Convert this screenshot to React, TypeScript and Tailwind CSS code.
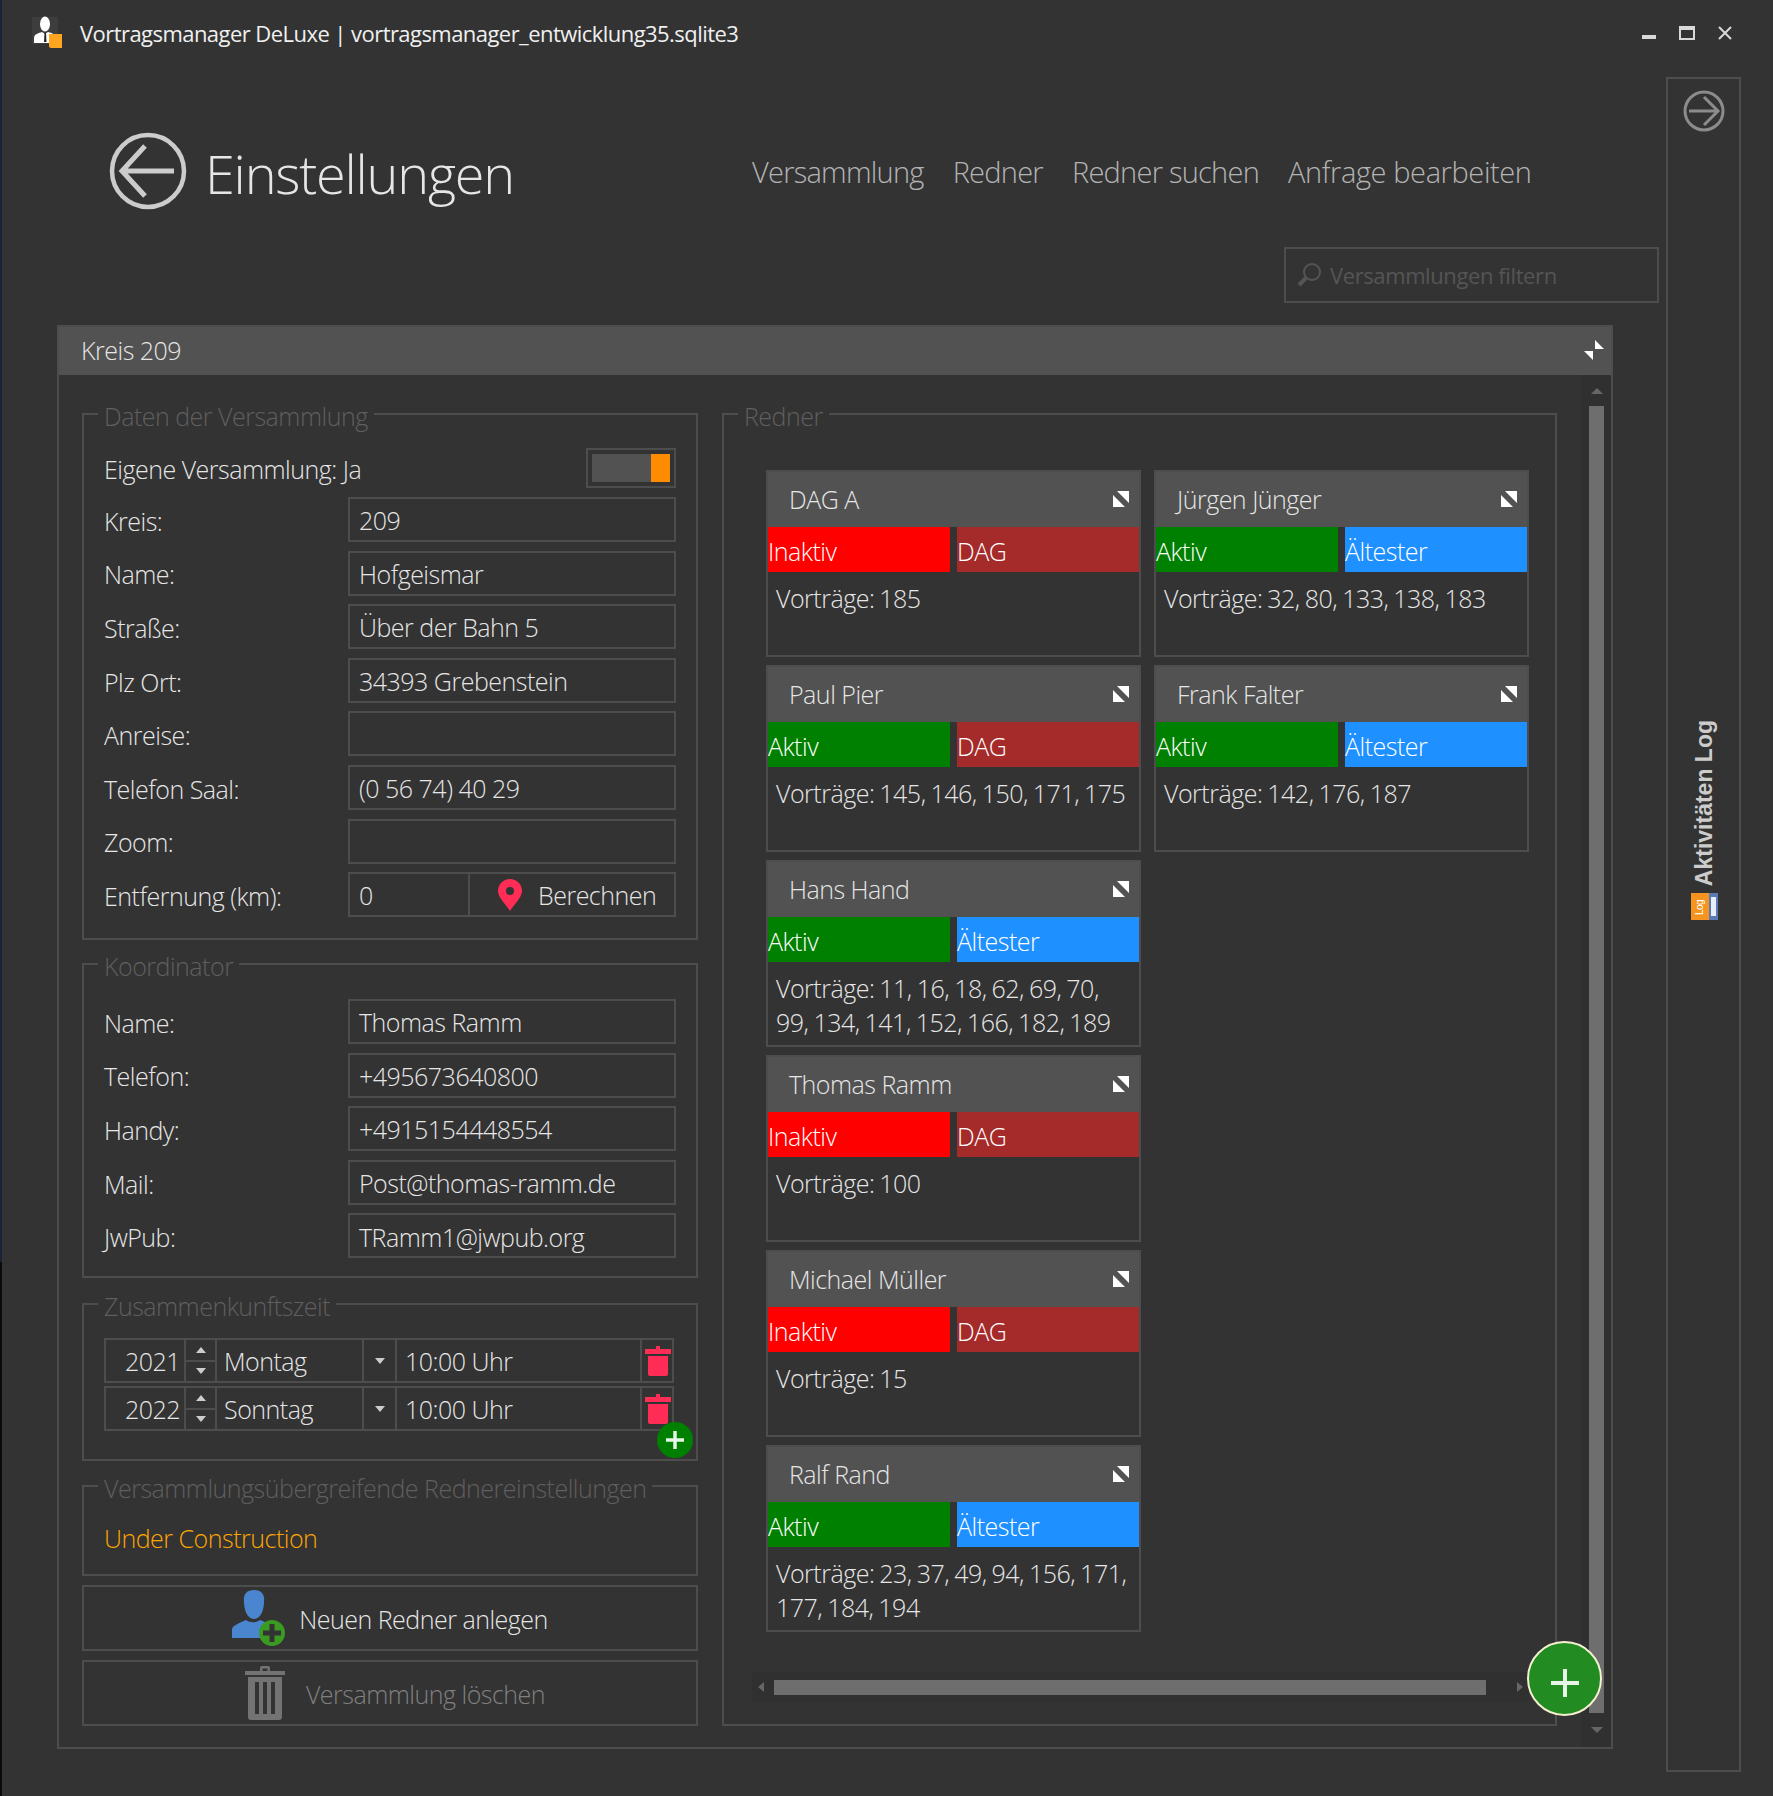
import type { ReactNode } from 'react'

const FONT = "font-['Open_Sans','Liberation_Sans',sans-serif]"

type Speaker = {
  name: string
  active: boolean
  role: 'DAG' | 'Ältester'
  talks: string
}

const LEFT_SPEAKERS: Speaker[] = [
  { name: 'DAG A', active: false, role: 'DAG', talks: 'Vorträge: 185' },
  { name: 'Paul Pier', active: true, role: 'DAG', talks: 'Vorträge: 145, 146, 150, 171, 175' },
  { name: 'Hans Hand', active: true, role: 'Ältester', talks: 'Vorträge: 11, 16, 18, 62, 69, 70, 99, 134, 141, 152, 166, 182, 189' },
  { name: 'Thomas Ramm', active: false, role: 'DAG', talks: 'Vorträge: 100' },
  { name: 'Michael Müller', active: false, role: 'DAG', talks: 'Vorträge: 15' },
  { name: 'Ralf Rand', active: true, role: 'Ältester', talks: 'Vorträge: 23, 37, 49, 94, 156, 171, 177, 184, 194' },
]

const RIGHT_SPEAKERS: Speaker[] = [
  { name: 'Jürgen Jünger', active: true, role: 'Ältester', talks: 'Vorträge: 32, 80, 133, 138, 183' },
  { name: 'Frank Falter', active: true, role: 'Ältester', talks: 'Vorträge: 142, 176, 187' },
]

function ExpandIcon() {
  return (
    <svg width="16" height="16" viewBox="0 0 16 16" className="shrink-0 -mt-[2px]">
      <path d="M0 4 L0 16 L12 16 Z M4 0 L16 0 L16 12 Z" fill="#fff" />
    </svg>
  )
}

function TrashRed() {
  return (
    <svg width="26" height="30" viewBox="0 0 26 30" className="ml-[2px]">
      <path d="M0 3h11V1a2 2 0 0 1 4 0v2h11v5H0z M3 10h20v18a2 2 0 0 1-2 2H5a2 2 0 0 1-2-2z" fill="#ff2d55" />
    </svg>
  )
}

function SpeakerCard({ speaker }: { speaker: Speaker }) {
  return (
    <div className="w-[375px] h-[187px] border-2 border-[#4d4d4d] flex flex-col shrink-0">
      <div className="h-[55px] bg-[#525252] flex items-center justify-between pl-[21px] pr-[10px] text-[25px] font-light text-[#e6e6e6]">
        <span>{speaker.name}</span>
        <ExpandIcon />
      </div>
      <div className="flex justify-between h-[45px] text-[25px] font-light text-white leading-[48px]">
        <div className={`w-[182px] ${speaker.active ? 'bg-[#008000]' : 'bg-[#ff0000]'}`}>
          {speaker.active ? 'Aktiv' : 'Inaktiv'}
        </div>
        <div className={`w-[182px] ${speaker.role === 'DAG' ? 'bg-[#a52a2a]' : 'bg-[#1e90ff]'}`}>
          {speaker.role}
        </div>
      </div>
      <p className="pl-[8px] pr-[8px] pt-[9px] text-[25px] font-light leading-[34px] [word-spacing:-1px] text-[#e6e6e6]">{speaker.talks}</p>
    </div>
  )
}

function Group({ title, className, children }: { title: string; className?: string; children: ReactNode }) {
  return (
    <fieldset className={`border-2 border-[#4d4d4d] px-[20px] min-w-0 shrink-0 ${className ?? ''}`}>
      <legend className="-ml-[6px] px-[6px] h-[32px] text-[25px] font-light leading-[36px] text-[#5f5f5f]">{title}</legend>
      {children}
    </fieldset>
  )
}

function Field({ label, value }: { label: string; value?: string }) {
  return (
    <div className="flex items-center h-[45px]">
      <span className="w-[244px] pt-[4px] text-[25px] font-light text-[#e6e6e6]">{label}</span>
      <div className="w-[328px] h-[45px] border-2 border-[#4d4d4d] pl-[9px] pt-[3px] flex items-center text-[25px] font-light text-[#e6e6e6]">
        {value}
      </div>
    </div>
  )
}

function MeetingRow({ year, day }: { year: string; day: string }) {
  return (
    <div className="flex h-[45px] text-[25px] font-light text-[#e6e6e6]">
      <div className="w-[82px] border-2 border-[#4d4d4d] flex items-center justify-end pr-[4px] pt-[2px]">{year}</div>
      <div className="w-[29px] flex flex-col border-y-2 border-[#4d4d4d]">
        <div className="flex-1 flex items-center justify-center border-b-2 border-[#4d4d4d]">
          <span className="w-0 h-0 border-x-[5px] border-x-transparent border-b-[6px] border-b-[#ccc]" />
        </div>
        <div className="flex-1 flex items-center justify-center">
          <span className="w-0 h-0 border-x-[5px] border-x-transparent border-t-[6px] border-t-[#ccc]" />
        </div>
      </div>
      <div className="w-[149px] border-2 border-[#4d4d4d] flex items-center pl-[7px] pt-[2px]">{day}</div>
      <div className="w-[31px] border-y-2 border-[#4d4d4d] flex items-center justify-center">
        <span className="w-0 h-0 border-x-[5px] border-x-transparent border-t-[6px] border-t-[#ccc]" />
      </div>
      <div className="w-[247px] border-2 border-[#4d4d4d] flex items-center pl-[8px] pt-[2px]">10:00 Uhr</div>
      <div className="w-[32px] border-y-2 border-r-2 border-[#4d4d4d] flex items-center justify-center">
        <TrashRed />
      </div>
    </div>
  )
}

export default function App() {
  return (
    <div className={`relative w-[1773px] h-[1796px] bg-[#333333] flex flex-col overflow-hidden tracking-[-0.5px] ${FONT}`}>
      <div className="absolute left-0 top-0 w-[2px] h-[1262px] bg-[#1c2238]" />
      <div className="absolute left-0 top-[1262px] w-[2px] h-[534px] bg-[#0a0a0a]" />

      <div className="h-[77px] shrink-0 flex">
        <div className="flex-1 flex items-start pl-[32px] pt-[15px]">
          <svg width="30" height="34" viewBox="0 0 30 34">
            <rect x="0" y="2" width="26" height="27" fill="#3d3d3d" />
            <ellipse cx="13" cy="9" rx="5" ry="7.500" fill="#fff" />
            <path d="M2 28v-5c0-4 5-5 8-6l3 2 3-2c2 .5 4 1 5 2h-4v9z" fill="#fff" />
            <path d="M12.500 18h1.500l.5 9h-2.500z" fill="#222" />
            <path d="M17 19h13v14H19a2 2 0 0 1-2-2z" fill="#ffa51f" />
          </svg>
          <span className="ml-[18px] mt-[1px] text-[22px] text-[#f0f0f0] leading-[34px] tracking-[-0.55px]">
            Vortragsmanager DeLuxe | vortragsmanager_entwicklung35.sqlite3
          </span>
        </div>
        <div className="flex items-start gap-[23px] pr-[41px] pt-[26px]">
          <div className="w-[14px] h-[4px] mt-[9px] bg-[#d9d9d9]" />
          <div className="w-[16px] h-[14px] border-2 border-t-4 border-[#d9d9d9]" />
          <svg width="14" height="14" viewBox="0 0 14 14" stroke="#d9d9d9" strokeWidth="2">
            <path d="M1 1l12 12M13 1L1 13" />
          </svg>
        </div>
      </div>

      <div className="flex-1 flex min-h-0">
        <main className="w-[1666px] shrink-0 pl-[57px]">
          <div className="h-[170px] flex items-start">
            <svg width="78" height="78" viewBox="0 0 78 78" className="ml-[52px] mt-[55px]" fill="none">
              <circle cx="39" cy="39" r="36" stroke="#cccccc" strokeWidth="4.5" />
              <path d="M13 39h52M36 14L13 39l23 25" stroke="#cccccc" strokeWidth="5" />
            </svg>
            <h1 className="ml-[18px] mt-[61px] text-[54px] font-light leading-[70px] tracking-[-1.2px] text-[#e6e6e6]">Einstellungen</h1>
            <nav className="ml-[238px] mt-[75px] flex gap-[29px] text-[29px] font-light leading-[40px] tracking-[-0.75px] text-[#b3b3b3]">
              <span>Versammlung</span>
              <span>Redner</span>
              <span>Redner suchen</span>
              <span className="tracking-[-0.4px]">Anfrage bearbeiten</span>
            </nav>
          </div>

          <div className="flex justify-end pr-[7px]">
            <div className="w-[375px] h-[56px] border-2 border-[#4d4d4d] flex items-center pl-[10px] gap-[8px] text-[22px] tracking-[-0.4px] text-[#555555]">
              <svg width="26" height="26" viewBox="0 0 26 26" fill="none" stroke="#555" strokeWidth="2">
                <circle cx="16" cy="10" r="8" />
                <path d="M10 16l-7 7" strokeWidth="4" />
              </svg>
              Versammlungen filtern
            </div>
          </div>

          <section className="relative w-[1556px] h-[1424px] mt-[22px] border-2 border-[#4d4d4d] flex flex-col">
            <div className="h-[48px] shrink-0 bg-[#525252] flex justify-between pl-[22px] pr-[7px] text-[25px] font-light leading-[46px] text-[#e6e6e6]">
              <span>Kreis 209</span>
              <svg width="20" height="20" viewBox="0 0 20 20" fill="#fff" className="mt-[13px]">
                <path d="M11 0l9 9h-9zM0 11h9v9z" />
              </svg>
            </div>

            <div className="flex-1 flex min-h-0">
              <div className="w-[1523px] shrink-0 flex pt-[23px] pl-[23px] gap-[24px]">
                <div className="w-[616px] shrink-0 flex flex-col">
                  <Group title="Daten der Versammlung" className="h-[542px]">
                    <div className="flex items-center justify-between h-[40px] mt-[18px] text-[25px] font-light text-[#e6e6e6]">
                      <span className="pt-[4px]">Eigene Versammlung: Ja</span>
                      <div className="w-[90px] h-[40px] border-2 border-[#4d4d4d] p-[4px]">
                        <div className="h-full bg-[#525252] flex justify-end">
                          <div className="w-[19px] bg-[#ff8c00]" />
                        </div>
                      </div>
                    </div>
                    <div className="flex flex-col gap-[8.6px] mt-[9px]">
                      <Field label="Kreis:" value="209" />
                      <Field label="Name:" value="Hofgeismar" />
                      <Field label="Straße:" value="Über der Bahn 5" />
                      <Field label="Plz Ort:" value="34393 Grebenstein" />
                      <Field label="Anreise:" />
                      <Field label="Telefon Saal:" value="(0 56 74) 40 29" />
                      <Field label="Zoom:" />
                      <div className="flex items-center h-[45px] text-[25px] font-light text-[#e6e6e6]">
                        <span className="w-[244px] pt-[4px]">Entfernung (km):</span>
                        <div className="w-[122px] h-[45px] border-2 border-[#4d4d4d] pl-[9px] pt-[3px] flex items-center">0</div>
                        <div className="w-[206px] h-[45px] border-2 border-l-0 border-[#4d4d4d] flex items-center pl-[28px] gap-[16px]">
                          <svg width="24" height="32" viewBox="0 0 24 32">
                            <path fillRule="evenodd" d="M12 0a12 12 0 0 1 12 12c0 7-8 13-12 20C8 25 0 19 0 12A12 12 0 0 1 12 0zm0 8a4 4 0 1 0 0 8 4 4 0 0 0 0-8z" fill="#ff2d55" />
                          </svg>
                          <span className="pt-[3px]">Berechnen</span>
                        </div>
                      </div>
                    </div>
                  </Group>

                  <Group title="Koordinator" className="h-[330px] mt-[8px]">
                    <div className="flex flex-col gap-[8.6px] mt-[19px]">
                      <Field label="Name:" value="Thomas Ramm" />
                      <Field label="Telefon:" value="+495673640800" />
                      <Field label="Handy:" value="+4915154448554" />
                      <Field label="Mail:" value="Post@thomas-ramm.de" />
                      <Field label="JwPub:" value="TRamm1@jwpub.org" />
                    </div>
                  </Group>

                  <Group title="Zusammenkunftszeit" className="h-[173px] mt-[10px]">
                    <div className="relative flex flex-col gap-[3px] mt-[18px]">
                      <MeetingRow year="2021" day="Montag" />
                      <MeetingRow year="2022" day="Sonntag" />
                      <div className="absolute -right-[17px] -bottom-[27px] w-[36px] h-[36px] rounded-full bg-[#008000] flex items-center justify-center">
                        <svg width="20" height="20" viewBox="0 0 20 20" stroke="#e6f5e6" strokeWidth="3.5">
                          <path d="M10 1v18M1 10h18" />
                        </svg>
                      </div>
                    </div>
                  </Group>

                  <Group title="Versammlungsübergreifende Rednereinstellungen" className="h-[106px] mt-[9px]">
                    <p className="mt-[18px] text-[25px] font-light text-[#ffa500]">Under Construction</p>
                  </Group>

                  <button className="h-[66px] mt-[9px] border-2 border-[#4d4d4d] flex items-center justify-center gap-[13px] text-[25px] font-light text-[#e6e6e6]">
                    <svg width="54" height="56" viewBox="0 0 54 56">
                      <path d="M22 0c8 0 11 5 10 12 0 7-3 17-10 17S12 19 12 12C11 5 14 0 22 0zM0 48V39c1-4 8-6 14-9 4 3 10 3 14 0 4 2 8 3 10 5v13z" fill="#4a86cf" />
                      <circle cx="40" cy="43" r="13" fill="#3a9a22" />
                      <path d="M40 34v18M31 43h18" stroke="#333" strokeWidth="5" />
                    </svg>
                    <span className="pt-[3px]">Neuen Redner anlegen</span>
                  </button>

                  <button className="h-[66px] mt-[9px] pl-[10px] border-2 border-[#4d4d4d] flex items-center justify-center gap-[21px] text-[25px] font-light text-[#808080]">
                    <svg width="40" height="54" viewBox="0 0 40 54" fill="#737373">
                      <path d="M15 5V2a2 2 0 0 1 2-2h6a2 2 0 0 1 2 2v3h15v4H0V5zM17.500 5h5V2.500h-5z" fillRule="evenodd" />
                      <path d="M3 11h34v40a3 3 0 0 1-3 3H6a3 3 0 0 1-3-3zM10 16v32h4V16zM18 16v32h4V16zM26 16v32h4V16z" fillRule="evenodd" />
                    </svg>
                    <span className="pt-[3px]">Versammlung löschen</span>
                  </button>
                </div>

                <Group title="Redner" className="relative w-[835px] h-[1328px]">
                  <div className="flex gap-[13px] pl-[22px] pt-[40px]">
                    <div className="flex flex-col gap-[8px]">
                      {LEFT_SPEAKERS.map((s) => (
                        <SpeakerCard key={s.name} speaker={s} />
                      ))}
                    </div>
                    <div className="flex flex-col gap-[8px]">
                      {RIGHT_SPEAKERS.map((s) => (
                        <SpeakerCard key={s.name} speaker={s} />
                      ))}
                    </div>
                  </div>
                  <div className="absolute left-[28px] right-[26px] bottom-[22px] h-[30px] bg-[#303030] flex items-center px-[6px]">
                    <span className="w-0 h-0 border-y-[5px] border-y-transparent border-r-[6px] border-r-[#666]" />
                    <div className="ml-[10px] w-[712px] h-[15px] bg-[#6e6e6e]" />
                    <span className="ml-auto w-0 h-0 border-y-[5px] border-y-transparent border-l-[6px] border-l-[#666]" />
                  </div>
                </Group>
              </div>

              <div className="flex-1 bg-[#303030] flex flex-col items-center pt-[13px] pb-[14px]">
                <span className="w-0 h-0 border-x-[6px] border-x-transparent border-b-[6px] border-b-[#666]" />
                <div className="w-[15px] flex-1 mt-[12px] mb-[14px] bg-[#6e6e6e]" />
                <span className="w-0 h-0 border-x-[6px] border-x-transparent border-t-[6px] border-t-[#666]" />
              </div>
            </div>

            <div className="absolute left-[1468px] top-[1314px] w-[75px] h-[75px] rounded-full bg-[#228b22] border-2 border-[#f5f0d0] flex items-center justify-center">
              <svg width="30" height="30" viewBox="0 0 30 30" stroke="#e6f5e6" strokeWidth="4" className="mt-[8px]">
                <path d="M15 1v28M1 15h28" />
              </svg>
            </div>
          </section>
        </main>

        <aside className="w-[75px] h-[1695px] shrink-0 border-2 border-[#4d4d4d] flex flex-col items-center pt-[11px]">
          <svg width="42" height="42" viewBox="0 0 42 42" fill="none" stroke="#8c8c8c">
            <circle cx="21" cy="21" r="19" strokeWidth="3" />
            <path d="M6 21h29M21 7l14 14-14 14" strokeWidth="3" />
          </svg>
          <div className="mt-[588px] ml-[2px] flex flex-col items-center gap-[7px]">
            <span className="[writing-mode:vertical-rl] rotate-180 font-['Liberation_Sans',sans-serif] font-bold text-[23px] tracking-normal text-[#cccccc]">
              Aktivitäten Log
            </span>
            <svg width="27" height="27" viewBox="0 0 27 27">
              <rect x="0" y="0" width="18" height="27" fill="#f5941e" />
              <rect x="18" y="0" width="9" height="27" fill="#5a7ab5" />
              <rect x="20" y="4" width="5" height="19" fill="#e8eef8" />
              <text x="12" y="22" fontSize="10" fontFamily="Liberation Sans, sans-serif" fill="#fff" transform="rotate(-90 12 22)">Log</text>
            </svg>
          </div>
        </aside>
      </div>
    </div>
  )
}
